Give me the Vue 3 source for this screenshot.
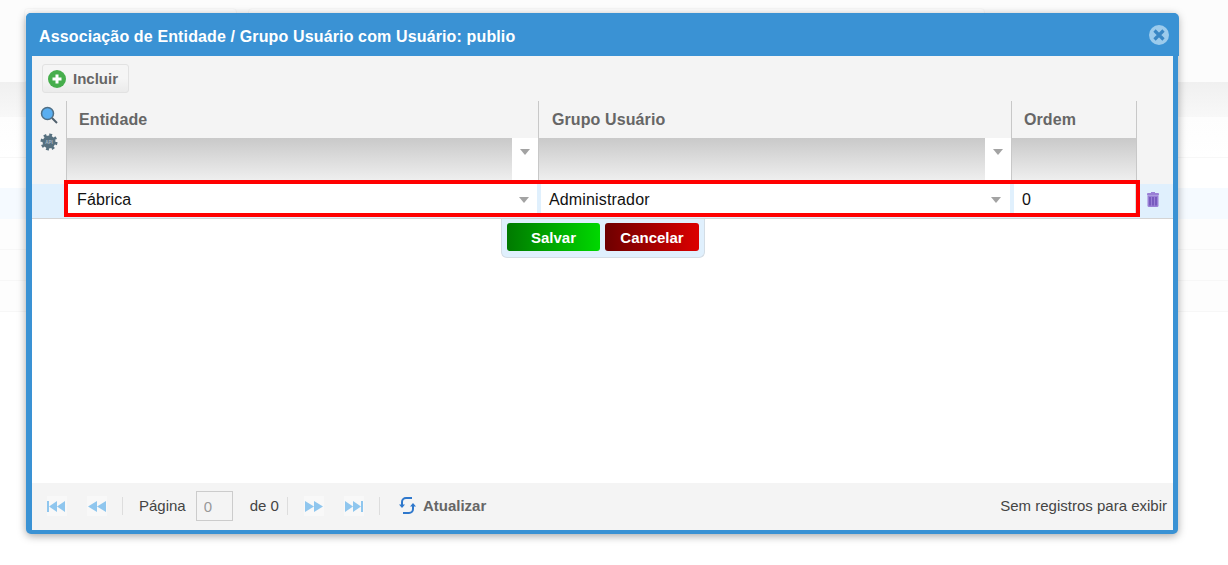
<script setup>
const columns = [
  { name: 'Entidade', cls: 'c1', select: true, value: 'Fábrica' },
  { name: 'Grupo Usuário', cls: 'c2', select: true, value: 'Administrador' },
  { name: 'Ordem', cls: 'c3', select: false, value: '0' }
]
</script>

<template>
  <div class="page">
    <div class="bg-top">
      <div class="bg-card first"></div>
      <div class="bg-card second"></div>
    </div>
    <div class="bg-head"></div>
    <div class="bg-row tall"></div>
    <div class="bg-row mid"></div>
    <div class="bg-row blue"></div>
    <div class="bg-row"></div>
    <div class="bg-row"></div>
    <div class="bg-row"></div>

    <section class="win">
      <header class="title">
        <span>Associação de Entidade / Grupo Usuário com Usuário: publio</span>
        <svg class="close" width="20" height="20" viewBox="0 0 20 20">
          <circle cx="10" cy="10" r="10" fill="#9ccbec" />
          <path d="M5.500 5.500l9 9M14.500 5.500l-9 9" stroke="#3a87c4" stroke-width="3.200" fill="none" />
        </svg>
      </header>
      <div class="body">
        <div class="toolbar">
          <button class="add">
            <svg width="18" height="18" viewBox="0 0 18 18">
              <circle cx="9" cy="9" r="9" fill="#46ae4c" />
              <path d="M9 4.500v9M4.500 9h9" stroke="#fff" stroke-width="3" fill="none" />
            </svg>
            Incluir
          </button>
        </div>

        <div class="gridhead">
          <div class="side">
            <svg width="18" height="18" viewBox="0 0 18 18">
              <circle cx="7.500" cy="7.500" r="6" fill="#5aaef0" stroke="#4f6f86" stroke-width="1.500" />
              <path d="M12 12l5 5" stroke="#4f5f6c" stroke-width="2" />
            </svg>
            <svg width="18" height="18" viewBox="0 0 18 18">
              <circle cx="9" cy="9" r="7" fill="none" stroke="#56707f" stroke-width="3" stroke-dasharray="2.750 2.750" />
              <circle cx="9" cy="9" r="6.500" fill="#56707f" />
              <text x="9" y="10.800" text-anchor="middle" class="apitxt">API</text>
            </svg>
          </div>
          <div v-for="c in columns" :key="c.name" class="col" :class="c.cls">
            <div class="colname">{{ c.name }}</div>
            <div class="filter">
              <div class="shade"></div>
              <div v-if="c.select" class="drop"><i class="arrow"></i></div>
            </div>
          </div>
        </div>

        <div class="row">
          <div class="editrow">
            <div v-for="c in columns" :key="c.name" class="cell" :class="c.cls">
              <span>{{ c.value }}</span>
              <i v-if="c.select" class="arrow"></i>
            </div>
          </div>
          <svg class="trash" width="12" height="15" viewBox="0 0 12 15">
            <rect x="4" y="0" width="4" height="2" fill="#9a80d6" />
            <rect x="0" y="1" width="12" height="2.500" rx="1" fill="#9a80d6" />
            <path d="M0.500 3.500h11v10a1.500 1.500 0 0 1-1.500 1.500H2a1.500 1.500 0 0 1-1.500-1.500z" fill="#9a80d6" />
            <path d="M3 5v8.500M6 5v8.500M9 5v8.500" stroke="#6d4fb6" stroke-width="1.500" />
          </svg>
        </div>

        <div class="main">
          <div class="actions">
            <button class="btn save">Salvar</button>
            <button class="btn cancel">Cancelar</button>
          </div>
        </div>

        <footer class="pager">
          <div class="pbtn flush">
            <svg width="18" height="11" viewBox="0 0 18 11"><path d="M0 0h2v11H0zM10 0v11L2 5.500zM18 0v11l-8-5.500z" fill="#8fc6ee" /></svg>
          </div>
          <div class="pbtn second">
            <svg width="18" height="11" viewBox="0 0 18 11"><path d="M9 0v11L0 5.500zM18 0v11L9 5.500z" fill="#8fc6ee" /></svg>
          </div>
          <i class="sep before-label"></i>
          <span class="lbl">Página</span>
          <input class="pageinput" value="0" disabled />
          <span class="of">de 0</span>
          <i class="sep tight"></i>
          <div class="pbtn">
            <svg width="18" height="11" viewBox="0 0 18 11"><path d="M0 0v11l9-5.500zM9 0v11l9-5.500z" fill="#8fc6ee" /></svg>
          </div>
          <div class="pbtn second">
            <svg width="18" height="11" viewBox="0 0 18 11"><path d="M0 0v11l8-5.500zM8 0v11l8-5.500zM16 0h2v11h-2z" fill="#8fc6ee" /></svg>
          </div>
          <i class="sep"></i>
          <div class="refresh">
            <svg width="17" height="19" viewBox="0 0 17 19" fill="none">
              <path d="M3 9V6a4 4 0 0 1 4-4h6" stroke="#2f78cc" stroke-width="2" />
              <path d="M14 10v3a4 4 0 0 1-4 4H4" stroke="#2f78cc" stroke-width="2" />
              <path d="M0 8.500h6L3 12zM11 10.500h6L14 7z" fill="#2f78cc" />
            </svg>
            Atualizar
          </div>
          <span class="info">Sem registros para exibir</span>
        </footer>
      </div>
    </section>
  </div>
</template>

<style>
html, body { margin: 0; background: #fff; overflow: hidden; }
</style>

<style scoped>
.page {
  position: relative;
  width: 1228px;
  height: 565px;
  overflow: hidden;
  background: #fff;
  font-family: "Liberation Sans", Arial, sans-serif;
}
.bg-top {
  height: 82px;
  box-sizing: border-box;
  padding: 8px 0 0 24px;
  display: flex;
  gap: 11px;
  background: #fcfcfc;
}
.bg-card { height: 74px; background: #fefefe; border: 1px solid #f7f7f7; border-radius: 4px 4px 0 0; box-sizing: border-box; }
.bg-card.first { width: 213px; }
.bg-card.second { width: 737px; }
.bg-head { height: 35px; background: linear-gradient(#f0f0f0, #f8f8f8); }
.bg-row { height: 31px; box-sizing: border-box; background: #fdfdfd; border-bottom: 1px solid #f7f7f7; }
.bg-row.tall { height: 41px; background: linear-gradient(#fdfdfd, #fff); }
.bg-row.mid { height: 30px; background: #fff; border-bottom: none; }
.bg-row.blue { background: #f5faff; border-bottom: none; }

.win {
  position: absolute;
  left: 26px;
  top: 13px;
  width: 1152px;
  height: 521px;
  box-sizing: border-box;
  display: flex;
  flex-direction: column;
  background: #3a92d4;
  border-radius: 5px;
  box-shadow: 0 2px 8px rgba(0, 0, 0, 0.35);
}
.title {
  height: 43px;
  flex: none;
  box-sizing: border-box;
  margin-right: -1px;
  display: flex;
  align-items: center;
  justify-content: space-between;
  padding: 4px 10px 0 13px;
  background: #3a92d4;
  border-radius: 5px 5px 0 0;
  color: #fff;
  font-size: 16px;
  font-weight: 700;
  letter-spacing: 0.135px;
}
.close { margin-top: -4px; }
.body {
  flex: 1;
  min-height: 0;
  margin: 0 5px 4px 6px;
  display: flex;
  flex-direction: column;
  background: #f4f4f4;
}
.toolbar { height: 45px; flex: none; box-sizing: border-box; padding: 8px 0 0 10px; }
.add {
  width: 87px;
  height: 29px;
  padding: 0 0 0 5px;
  display: flex;
  align-items: center;
  gap: 7px;
  box-sizing: border-box;
  border: 1px solid #e2e2e2;
  border-radius: 3px;
  background: linear-gradient(#f5f5f5 50%, #ebebeb);
  color: #666;
  font: 700 15px "Liberation Sans", Arial, sans-serif;
}
.gridhead { height: 83px; flex: none; display: flex; }
.side {
  width: 34px;
  flex: none;
  display: flex;
  flex-direction: column;
  align-items: flex-start;
  gap: 9px;
  padding: 5px 0 0 8px;
  box-sizing: border-box;
}
.apitxt { font: 700 4.500px "Liberation Sans", Arial, sans-serif; fill: #a9bcc8; }
.col { border-left: 1px solid #c8c8c8; box-sizing: border-box; display: flex; flex-direction: column; }
.col.c1 { width: 472px; }
.col.c2 { width: 473px; }
.col.c3 { width: 126px; border-right: 1px solid #c8c8c8; }
.colname {
  height: 37px;
  flex: none;
  line-height: 37px;
  padding-left: 12px;
  color: #666;
  font-size: 16px;
  font-weight: 700;
  letter-spacing: 0.1px;
}
.col.c2 .colname { padding-left: 13px; }
.filter { flex: 1; display: flex; }
.shade { flex: 1; background: linear-gradient(#c9c9c9, #f2f2f2); }
.drop {
  width: 26px;
  display: flex;
  align-items: flex-start;
  justify-content: center;
  padding-top: 11px;
  box-sizing: border-box;
  background: #fff;
}
.arrow {
  display: block;
  width: 0;
  height: 0;
  border-left: 5.500px solid transparent;
  border-right: 5.500px solid transparent;
  border-top: 6px solid #a3a3a3;
}
.row {
  height: 35px;
  flex: none;
  position: relative;
  box-sizing: border-box;
  background: #e0f0fd;
  border-bottom: 1px solid #d4d4d4;
}
.editrow {
  position: absolute;
  left: 32px;
  top: -4px;
  width: 1076px;
  height: 37px;
  box-sizing: border-box;
  border: 4px solid #f00;
  background: #e0f0fd;
  display: flex;
}
.cell {
  height: 29px;
  flex: none;
  box-sizing: border-box;
  background: #fff;
  display: flex;
  align-items: center;
  justify-content: space-between;
  padding: 3px 9px 0 8px;
  font-size: 16px;
  letter-spacing: 0.15px;
  color: #111;
}
.cell.c1 { width: 469px; margin-right: 4px; padding-left: 9px; padding-right: 8px; }
.cell.c2 { width: 469px; margin-right: 4px; }
.cell.c3 { width: 122px; border-right: 1px solid #ddd; }
.trash { position: absolute; left: 1115px; top: 8px; }
.main { flex: 1; min-height: 0; background: #fff; display: flex; justify-content: center; }
.actions {
  width: 204px;
  height: 39px;
  margin-left: 1px;
  box-sizing: border-box;
  padding: 4px 5px 0;
  display: flex;
  gap: 5px;
  background: #e0f0fd;
  border: 1px solid #d4dde5;
  border-top: none;
  border-radius: 0 0 6px 6px;
}
.btn {
  width: 93px;
  height: 28px;
  padding: 0;
  border: none;
  border-radius: 3px;
  color: #fff;
  font: 700 15px "Liberation Sans", Arial, sans-serif;
}
.save { background: linear-gradient(90deg, #007a00, #00d800); }
.cancel { width: 94px; background: linear-gradient(90deg, #6e0000, #dc0000); }
.pager {
  height: 47px;
  flex: none;
  box-sizing: border-box;
  display: flex;
  align-items: center;
  padding: 0 6px 1px 15px;
  font-size: 15px;
  color: #444;
}
.lbl, .of, .info, .refresh { margin-top: -2px; }
.pbtn { width: 20px; height: 20px; display: flex; align-items: center; justify-content: center; background: #f8f8f8; }
.pbtn.flush { justify-content: flex-start; }
.pbtn.second { margin-left: 20px; }
.sep { width: 1px; height: 18px; background: #ddd; margin: 0 15px; }
.sep.before-label { margin-right: 16px; }
.sep.tight { margin: 0 16px 0 8px; }
.pageinput {
  width: 37px;
  height: 30px;
  margin: 0 17px 0 10px;
  box-sizing: border-box;
  border: 1px solid #ccc;
  background: #f4f4f4;
  text-align: left;
  padding: 0 0 0 7px;
  color: #999;
  font: 15px "Liberation Sans", Arial, sans-serif;
}
.refresh {
  display: flex;
  align-items: center;
  gap: 7px;
  margin-left: 4px;
  color: #666;
  font-weight: 700;
}
.info { margin-left: auto; }
</style>
